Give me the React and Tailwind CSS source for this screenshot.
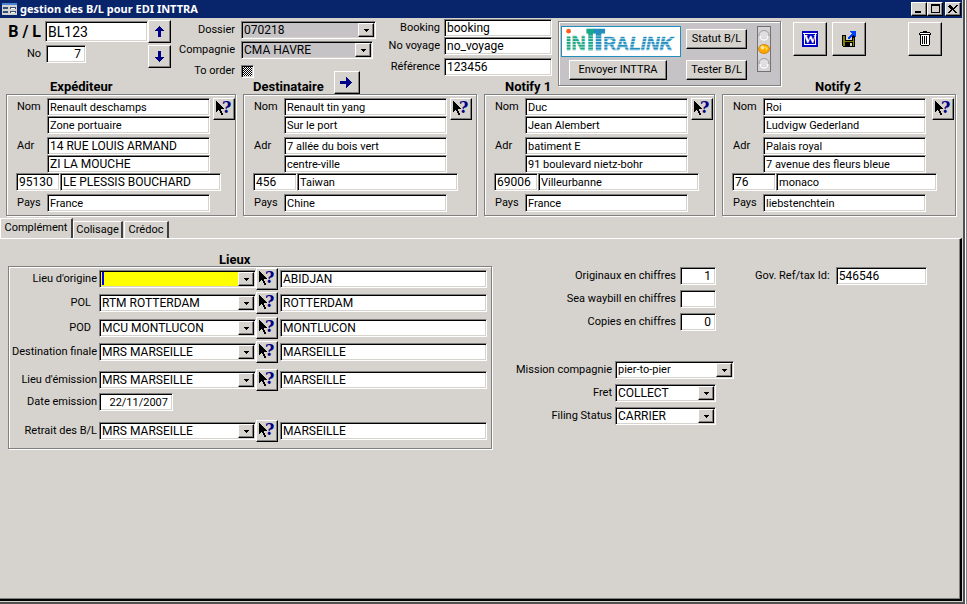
import React, { useId } from "react";

const sunken =
  "border border-t-[#808080] border-l-[#808080] border-r-white border-b-white shadow-[inset_1px_1px_0_#000,inset_-1px_-1px_0_#d6d3ce]";
const raised =
  "border border-t-white border-l-white border-r-black border-b-black bg-[#d6d3ce] shadow-[inset_-1px_-1px_0_#808080]";
const etched =
  "border border-[#808080] shadow-[inset_1px_1px_0_#fff,1px_1px_0_#fff]";

// Codes and values in capitals are set one size larger than running text.
const sizeFor = (value) => (/^[A-Z0-9 ]+$/.test(value ?? "") ? "text-[12px]" : "text-[11px]");

function Field({ className = "", size, ...props }) {
  return (
    <input
      type="text"
      className={`block h-[18px] shrink-0 rounded-none bg-white pl-0.5 pr-1 leading-4 outline-none ${sunken} ${size ?? sizeFor(props.defaultValue)} ${className}`}
      {...props}
    />
  );
}

function Combo({ id, value, label, className = "", tone = "bg-white", caret = false }) {
  return (
    <div className={`relative h-[18px] shrink-0 ${className}`}>
      <select
        id={id}
        aria-label={label}
        defaultValue={value}
        className={`block h-full w-full appearance-none rounded-none pl-0.5 pr-5 leading-4 outline-none ${tone} ${sunken} ${sizeFor(value)}`}
      >
        <option value={value}>{value}</option>
      </select>
      {caret && <span className="absolute bottom-[3px] left-[3px] top-[2px] w-0.5 bg-[#0000ff]" />}
      <span
        className={`pointer-events-none absolute bottom-0.5 right-0.5 top-0.5 flex w-4 items-center justify-center ${raised}`}
      >
        <svg width="5" height="3" viewBox="0 0 5 3" shapeRendering="crispEdges">
          <path d="M0 0h5v1h-1v1h-1v1h-1v-1h-1v-1h-1z" />
        </svg>
      </span>
    </div>
  );
}

function HelpButton({ label }) {
  return (
    <button
      type="button"
      aria-label={label}
      className={`flex h-[22px] w-[22px] shrink-0 items-center justify-center ${raised}`}
    >
      <svg width="20" height="20" viewBox="0 0 20 20">
        <path
          d="M2 2v11h1v-1h1v-1h1v1h1v2h1v2h2v-2h-1v-2h-1v-2h3v-1h-1v-1h-1v-1h-1v-1h-1v-1h-1v-1h-1v-1h-1v-1h-1v-1z"
          shapeRendering="crispEdges"
        />
        <text x="8" y="14" fill="#000084" className="font-['DejaVu_Serif',serif] text-[16px] font-bold">
          ?
        </text>
      </svg>
    </button>
  );
}

function ArrowButton({ label, direction, className = "" }) {
  const paths = {
    up: "M6 0h1v1h1v1h1v1h1v1h1v1h-3v6h-3v-6h-3v-1h1v-1h1v-1h1v-1h1z",
    down: "M5 0h3v6h3v1h-1v1h-1v1h-1v1h-1v1h-1v-1h-1v-1h-1v-1h-1v-1h-1v-1h3z",
    right: "M0 4h6v-4h1v1h1v1h1v1h1v1h1v1h1v1h-1v1h-1v1h-1v1h-1v1h-1v1h-1v-4h-6z",
  };
  return (
    <button
      type="button"
      aria-label={label}
      className={`flex h-[23px] shrink-0 items-center justify-center ${raised} ${className}`}
    >
      <svg width="13" height="12" viewBox="0 0 13 12" fill="#000084" shapeRendering="crispEdges">
        <path d={paths[direction]} />
      </svg>
    </button>
  );
}

function InttraLogo() {
  return (
    <svg
      width="120"
      height="31"
      viewBox="0 0 120 31"
      role="img"
      aria-label="INTTRALINK"
      className="block border border-[#218ebd] bg-white font-['Liberation_Sans',sans-serif] font-bold"
    >
      <defs>
        <pattern id="stripes" width="4" height="3" patternUnits="userSpaceOnUse">
          <rect width="4" height="1" fill="#fff" fillOpacity="0.700" />
        </pattern>
      </defs>
      <rect x="2" y="10" width="4" height="15" fill="#18a684" />
      <text x="7" y="25" fill="#18a684" stroke="#18a684" strokeWidth="0.600" fontSize="21">N</text>
      <text x="41" y="25" fill="#218ebd" stroke="#218ebd" strokeWidth="0.500" fontSize="19">RA</text>
      <text x="69" y="25" fill="#218ebd" stroke="#218ebd" strokeWidth="0.600" fontSize="20" fontStyle="italic">LINK</text>
      <path d="M23 2h9v5h-2v18h-5v-18h-2z" fill="#18a68c" />
      <path d="M31 2h12v5h-4v18h-6v-18h-2z" fill="#218ebd" />
      <rect x="1" y="9" width="117" height="17" fill="url(#stripes)" />
      <circle cx="4" cy="4.500" r="2.500" fill="#ff5d18" />
    </svg>
  );
}

function TrafficLight() {
  return (
    <svg width="14" height="46" viewBox="0 0 14 46" role="img" aria-label="Orange" className="shrink-0">
      <rect x="0.500" y="0.500" width="13" height="45" fill="#d6d3d6" stroke="#737173" />
      <ellipse cx="7" cy="9" rx="5" ry="4.500" fill="#dedfde" stroke="#9c9a9c" />
      <path d="M3 10a4 4 0 0 0 8 0" fill="none" stroke="#fff" strokeWidth="1.500" />
      <ellipse cx="7" cy="23" rx="5.500" ry="4.500" fill="#ffa600" stroke="#c67500" strokeWidth="0.700" />
      <circle cx="5.500" cy="21.500" r="2" fill="#ffe794" />
      <path d="M8 20l3 2-2 3z" fill="#ffe34a" />
      <ellipse cx="7" cy="37" rx="5" ry="4.500" fill="#dedfde" stroke="#9c9a9c" />
      <path d="M3 38a4 4 0 0 0 8 0" fill="none" stroke="#fff" strokeWidth="1.500" />
    </svg>
  );
}

function ToolButton({ label, children, className = "" }) {
  return (
    <button
      type="button"
      aria-label={label}
      className={`flex h-[34px] w-[34px] shrink-0 items-center justify-center ${raised} ${className}`}
    >
      {children}
    </button>
  );
}

function PushButton({ children, className = "" }) {
  return (
    <button type="button" className={`h-5 shrink-0 whitespace-nowrap text-center leading-4 ${raised} ${className}`}>
      {children}
    </button>
  );
}

function TitleBar() {
  const controls = [
    ["Réduire", "M2 7h6v2h-6z"],
    ["Agrandir", "M2 0h9v9h-9zM3 2v6h7v-6z"],
    ["Fermer", "M2 1h2v1h1v1h1v1h1v-1h1v-1h1v-1h2v1h-1v1h-1v1h-1v1h-1v1h1v1h1v1h1v1h-2v-1h-1v-1h-1v-1h-1v1h-1v1h-1v1h-2v-1h1v-1h1v-1h1v-1h-1v-1h-1v-1h-1z"],
  ];
  return (
    <header className="flex h-[18px] items-center bg-[#08246b] pl-0.5 pr-px">
      <svg width="15" height="12" viewBox="0 0 15 12" shapeRendering="crispEdges">
        <rect width="15" height="12" fill="#d6d3ce" />
        <rect width="15" height="2" fill="#4a82d6" />
        <path d="M1 4h5v2h-5zM8 4h6v2h-6zM1 8h5v2h-5zM8 8h6v2h-6z" fill="#31517b" />
        <path d="M9 5h4v1h-4zM9 9h4v1h-4z" fill="#fff" />
      </svg>
      <h1 className="ml-[3px] font-['Noto_Sans',sans-serif] text-[11px] font-bold leading-4 text-white">
        gestion des B/L pour EDI INTTRA
      </h1>
      <div className="ml-auto flex">
        {controls.map(([name, d], i) => (
          <button
            key={name}
            type="button"
            aria-label={name}
            className={`flex h-[14px] w-4 items-center justify-center ${raised} ${i === 2 ? "ml-0.5" : ""}`}
          >
            <svg width="13" height="10" viewBox="0 0 13 10" fillRule="evenodd" shapeRendering="crispEdges">
              <path d={d} />
            </svg>
          </button>
        ))}
      </div>
    </header>
  );
}

function Header() {
  return (
    <section className="flex h-[68px] items-start">
      <div className="flex flex-col gap-0.5 pt-0.5">
        <div className="flex items-center">
          <label htmlFor="bl" className="w-[41px] whitespace-nowrap text-right text-base font-bold leading-5">B / L</label>
          <Field id="bl" defaultValue="BL123" size="text-sm" className="ml-1 h-[21px] w-[103px]" />
          <ArrowButton label="Précédent" direction="up" className="w-[23px]" />
        </div>
        <div className="flex items-start">
          <label htmlFor="no" className="w-[41px] text-right leading-[18px]">No</label>
          <Field id="no" defaultValue="7" className="ml-[5px] w-10 text-right" />
          <ArrowButton label="Suivant" direction="down" className="ml-[62px] w-[23px]" />
        </div>
      </div>

      <div className="flex flex-col gap-0.5 pt-[3px]">
        <div className="flex gap-1.5">
          <label htmlFor="dossier" className="w-16 text-right leading-[18px]">Dossier</label>
          <Combo id="dossier" value="070218" tone="bg-[#c6c3c6]" className="w-[135px]" />
        </div>
        <div className="flex gap-1.5">
          <label htmlFor="compagnie" className="w-16 text-right leading-[18px]">Compagnie</label>
          <Combo id="compagnie" value="CMA HAVRE" tone="bg-[#c6c3c6]" className="w-[132px]" />
        </div>
        <div className="flex items-center gap-1.5 pt-px">
          <label htmlFor="order" className="w-16 text-right leading-[18px]">To order</label>
          <input
            id="order"
            type="checkbox"
            className={`h-[13px] w-[13px] appearance-none bg-[repeating-conic-gradient(#000_0_25%,#fff_0_50%)] bg-[length:2px_2px] ${sunken}`}
          />
        </div>
      </div>

      <div className="flex flex-col pt-px">
        {[
          ["Booking", "booking"],
          ["No voyage", "no_voyage"],
          ["Référence", "123456"],
        ].map(([name, value], i) => (
          <div key={name} className={`flex gap-1 ${i === 2 ? "pt-[3px]" : ""}`}>
            <label htmlFor={name} className="w-16 whitespace-nowrap text-right leading-[18px]">{name}</label>
            <Field id={name} defaultValue={value} size="text-[12px]" className="w-[108px]" />
          </div>
        ))}
      </div>

      <div className={`ml-1.5 mt-[3px] flex h-[65px] w-[223px] shrink-0 gap-2.5 bg-[#c6c3c6] pl-0.5 pt-1 ${etched}`}>
        <div className="flex flex-col gap-[3px]">
          <div className="flex gap-[5px]">
            <InttraLogo />
            <div className="pt-[3px]">
              <PushButton className="w-[61px]">Statut B/L</PushButton>
            </div>
          </div>
          <div className="flex justify-between pl-2">
            <PushButton className="w-[98px]">Envoyer INTTRA</PushButton>
            <PushButton className="w-[61px]">Tester B/L</PushButton>
          </div>
        </div>
        <TrafficLight />
      </div>

      <div className="ml-3 mt-1 flex flex-1 gap-[5px] pr-5">
        <ToolButton label="Exporter vers Word">
          <svg width="16" height="16" viewBox="0 0 16 16">
            <rect width="16" height="16" fill="#0000c6" />
            <path d="M1 2h14v1h-14zM3 13h11v1h-11zM2 3h1v11h-1zM13 3h1v11h-1z" fill="#fff" shapeRendering="crispEdges" />
            <text
              x="8"
              y="12"
              textAnchor="middle"
              fill="#fff"
              className="font-['Liberation_Serif',serif] text-[13px] font-bold"
            >
              W
            </text>
          </svg>
        </ToolButton>
        <ToolButton label="Enregistrer">
          <svg width="16" height="17" viewBox="0 0 16 17" shapeRendering="crispEdges">
            <path d="M1 4h13v12h-12v-1h-1z" fill="#000" />
            <path d="M2 5h2v5h8v-3h1v8h-1v-4h-8v4h-2z" fill="#848200" />
            <path d="M2 10h11v1h-11z" fill="#848200" />
            <path d="M5 4h6v5h-6z" fill="#d6d3ce" />
            <path d="M9 12h2v3h-2z" fill="#d6d3ce" />
            <path d="M9 0h6v6h-1v-1h-1v-1h-1v1h-1v1h-1v1h-1v1h-2v-2h1v-1h1v-1h1v-1h1v-1h-1v-1h-1z" fill="#0041ff" />
          </svg>
        </ToolButton>
        <ToolButton label="Supprimer" className="ml-auto">
          <svg width="12" height="16" viewBox="0 0 12 16" shapeRendering="crispEdges">
            <path d="M1 2h10v1h-10zM2 4h8v10h-8z" fill="#fff" />
            <path d="M4 0h4v1h-4zM1 1h10v1h-10zM0 2h1v1h-1zM11 2h1v1h-1zM0 3h12v1h-12zM1 4h1v10h-1zM10 4h1v10h-1zM3 5h1v8h-1zM5 5h1v8h-1zM7 5h1v8h-1zM2 14h8v1h-8z" />
          </svg>
        </ToolButton>
      </div>
    </section>
  );
}

const parties = [
  { title: "Expéditeur", indent: "pl-11", lines: ["Renault deschamps", "Zone portuaire", "14 RUE LOUIS ARMAND", "ZI LA MOUCHE"], zip: "95130", city: "LE PLESSIS BOUCHARD", country: "France" },
  { title: "Destinataire", indent: "pl-2.5", lines: ["Renault tin yang", "Sur le port", "7 allée du bois vert", "centre-ville"], zip: "456", city: "Taiwan", country: "Chine", copy: true },
  { title: "Notify 1", indent: "pl-[21px]", lines: ["Duc", "Jean Alembert", "batiment E", "91 boulevard nietz-bohr"], zip: "69006", city: "Villeurbanne", country: "France" },
  { title: "Notify 2", indent: "pl-[93px]", lines: ["Roi", "Ludvigw Gederland", "Palais royal", "7 avenue des fleurs bleue"], zip: "76", city: "monaco", country: "liebstenchtein" },
];

function Party({ party }) {
  const id = useId();
  const { title, indent, lines, zip, city, country, copy } = party;
  const label = "w-[31px] shrink-0 pl-px leading-[18px]";
  return (
    <section>
      <div className={`flex h-3 items-end gap-2.5 ${indent}`}>
        <h2 className="text-[13px] font-bold leading-[14px]">{title}</h2>
        {copy && <ArrowButton label="Copier" direction="right" className="w-[26px]" />}
      </div>
      <div className={`flex h-[122px] flex-col pl-[9px] pt-[3px] ${etched}`}>
        <div className={`flex items-start ${title === "Notify 2" ? "gap-1.5" : "gap-[3px]"}`}>
          <div>
            <div className="flex">
              <label htmlFor={`${id}n`} className={label}>Nom</label>
              <Field id={`${id}n`} defaultValue={lines[0]} className="w-[163px]" />
            </div>
            <Field aria-label={`${title} nom 2`} defaultValue={lines[1]} className="ml-[31px] w-[163px]" />
          </div>
          <HelpButton label={`Rechercher ${title}`} />
        </div>
        <div className="flex pt-[3px]">
          <label htmlFor={`${id}a`} className={label}>Adr</label>
          <Field id={`${id}a`} defaultValue={lines[2]} className="w-[163px]" />
        </div>
        <Field aria-label={`${title} adresse 2`} defaultValue={lines[3]} className="ml-[31px] w-[163px]" />
        <div className="flex">
          <Field aria-label={`${title} code postal`} defaultValue={zip} className="w-11" />
          <Field aria-label={`${title} ville`} defaultValue={city} className="w-[161px]" />
        </div>
        <div className="flex pt-[3px]">
          <label htmlFor={`${id}p`} className={label}>Pays</label>
          <Field id={`${id}p`} defaultValue={country} className="w-[163px]" />
        </div>
      </div>
    </section>
  );
}

const places = [
  { label: "Lieu d'origine", code: "", name: "ABIDJAN", space: "" },
  { label: "POL", code: "RTM ROTTERDAM", name: "ROTTERDAM", space: "mt-0.5", inset: "pr-2" },
  { label: "POD", code: "MCU MONTLUCON", name: "MONTLUCON", space: "mt-[3px]", inset: "pr-2" },
  { label: "Destination finale", code: "MRS MARSEILLE", name: "MARSEILLE", space: "mt-0.5" },
  { label: "Lieu d'émission", code: "MRS MARSEILLE", name: "MARSEILLE", space: "mt-1.5" },
  { label: "Date emission", date: "22/11/2007", space: "" },
  { label: "Retrait des B/L", code: "MRS MARSEILLE", name: "MARSEILLE", space: "mt-[7px]" },
];

function Places() {
  return (
    <section className="w-[484px] shrink-0">
      <h2 className="pl-[211px] text-[13px] font-bold leading-3">Lieux</h2>
      <div className={`h-[183px] pt-px ${etched}`}>
        {places.map((p) => (
          <div key={p.label} className={`flex h-[22px] items-center ${p.space}`}>
            <label htmlFor={p.label} className={`w-[90px] shrink-0 whitespace-nowrap text-right leading-4 ${p.inset ?? "pr-0.5"}`}>
              {p.label}
            </label>
            {p.date ? (
              <Field id={p.label} defaultValue={p.date} className="w-[74px] text-right" />
            ) : (
              <>
                <Combo id={p.label} value={p.code} tone={p.code ? "bg-white" : "bg-[#ffff00]"} caret={!p.code} className="w-[157px]" />
                <HelpButton label={`Rechercher ${p.label}`} />
                <Field aria-label={`${p.label} nom`} defaultValue={p.name} className="ml-0.5 w-[207px]" />
              </>
            )}
          </div>
        ))}
      </div>
    </section>
  );
}

function Details() {
  return (
    <div className="flex flex-1 flex-col pt-[13px]">
      <div className="flex items-start">
        <div className="flex flex-col gap-[5px]">
          {[
            ["Originaux en chiffres", "1"],
            ["Sea waybill en chiffres", ""],
            ["Copies en chiffres", "0"],
          ].map(([name, value]) => (
            <div key={name} className="flex gap-1">
              <label htmlFor={name} className="w-[184px] text-right leading-[18px]">{name}</label>
              <Field id={name} defaultValue={value} className="w-9 text-right" />
            </div>
          ))}
        </div>
        <div className="ml-[39px] flex gap-1.5">
          <label htmlFor="gov" className="whitespace-nowrap leading-[18px]">Gov. Ref/tax Id:</label>
          <Field id="gov" defaultValue="546546" className="w-[91px]" />
        </div>
      </div>
      <div className="mt-[30px] flex flex-col gap-[5px]">
        {[
          ["Mission compagnie", "pier-to-pier", "w-[119px]"],
          ["Fret", "COLLECT", "w-[101px]"],
          ["Filing Status", "CARRIER", "w-[101px]"],
        ].map(([name, value, width]) => (
          <div key={name} className="flex gap-[3px]">
            <label htmlFor={name} className="w-[120px] whitespace-nowrap text-right leading-[18px]">{name}</label>
            <Combo id={name} value={value} className={width} />
          </div>
        ))}
      </div>
    </div>
  );
}

function Tabs() {
  const edge = "border-l border-t border-white border-r-2 border-r-[#424142] leading-4";
  return (
    <div role="tablist" className="mt-0.5 flex h-5 items-end">
      <button type="button" role="tab" aria-selected="true" className={`h-5 w-[73px] pb-0.5 ${edge}`}>Complément</button>
      <button type="button" role="tab" aria-selected="false" className={`h-[17px] w-[50px] ${edge}`}>Colisage</button>
      <button type="button" role="tab" aria-selected="false" className={`ml-px h-[17px] w-[45px] ${edge}`}>Crédoc</button>
    </div>
  );
}

export default function App() {
  return (
    <div className="flex min-h-screen bg-[#c6c3c6] font-['Roboto',sans-serif] text-[11px] text-black">
      <main className="flex flex-1 flex-col border-b-2 border-r-2 border-[#525152] bg-[#d6d3ce] pr-px">
        <TitleBar />
        <Header />
        <div className="-mt-1 grid grid-cols-[230fr_234fr_231fr_234fr] gap-[7px] pl-1.5 pr-1.5">
          {parties.map((party) => (
            <Party key={party.title} party={party} />
          ))}
        </div>
        <Tabs />
        <section className="flex flex-1 items-start border-b-2 border-r-2 border-t border-b-black border-r-black border-t-white pl-2 pt-[15px] shadow-[inset_-1px_-1px_0_#808080]">
          <Places />
          <Details />
        </section>
        <div className="h-px" />
      </main>
      <aside className="w-0.5 border-l border-white bg-[#848284]" />
    </div>
  );
}
